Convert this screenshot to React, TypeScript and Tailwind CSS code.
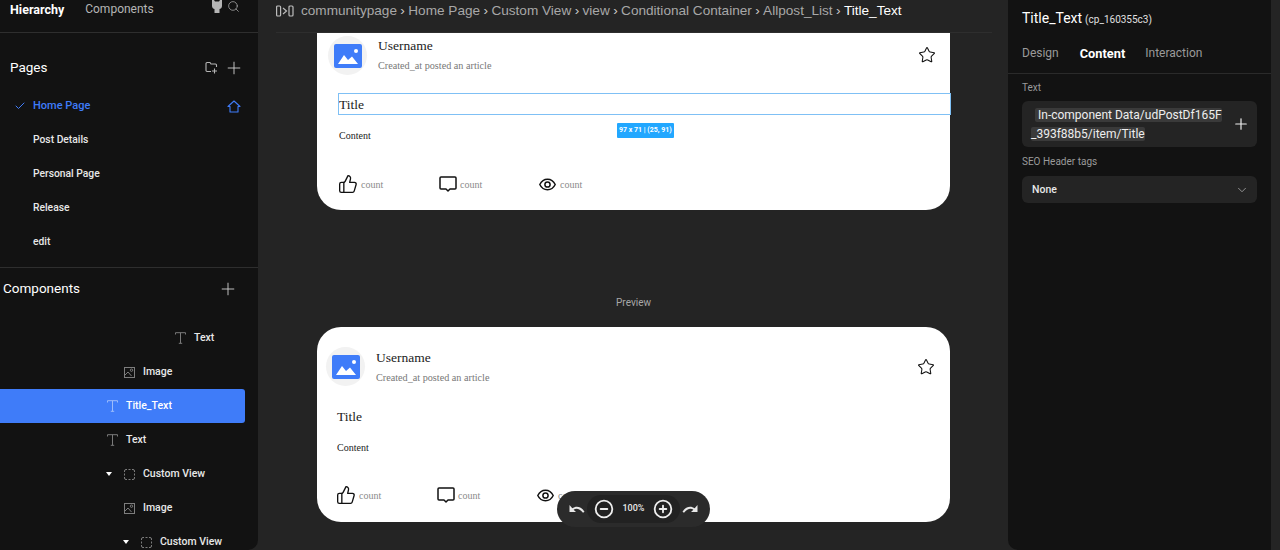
import { Check, ChevronDown, Plus, Search, Star, ThumbsUp, CirclePlus, CircleMinus } from "lucide-react";

const sans = "font-['Roboto',sans-serif]";
const serif = "font-['Liberation_Serif',serif]";

function TIcon({ c = "#7a7a7a" }: { c?: string }) {
  return (
    <svg width="11" height="12" viewBox="0 0 11 12" fill="none" stroke={c} strokeWidth="1" className="shrink-0">
      <path d="M0.5 2.5V0.7H10.5V2.5M5.5 0.7V11.3M3.8 11.3H7.2" />
    </svg>
  );
}
function ImgIcon() {
  return (
    <svg width="11" height="11" viewBox="0 0 11 11" fill="none" stroke="#7d7d7d" strokeWidth="1" className="shrink-0">
      <rect x="0.5" y="0.5" width="10" height="10" />
      <path d="M0.5 8.5L4 5L7.5 9" />
      <circle cx="7.5" cy="3.2" r="1.2" />
    </svg>
  );
}
function ViewIcon() {
  return (
    <svg width="11" height="11" viewBox="0 0 11 11" fill="none" stroke="#7d7d7d" strokeWidth="1" className="shrink-0">
      <path d="M0.5 3V2a1.5 1.5 0 0 1 1.5-1.5H3M8 0.5H9a1.5 1.5 0 0 1 1.5 1.5V3M10.5 8V9a1.5 1.5 0 0 1-1.5 1.5H8M3 10.5H2A1.5 1.5 0 0 1 0.5 9V8M4.5 0.5H6.5M4.5 10.5H6.5M0.5 4.5V6.5M10.5 4.5V6.5" />
    </svg>
  );
}
function Caret() {
  return <span className="w-0 h-0 border-x-[3px] border-x-transparent border-t-[4px] border-t-white shrink-0" />;
}
function TreeRow({ pl, icon, label, caret, active }: { pl: string; icon: React.ReactNode; label: string; caret?: boolean; active?: boolean }) {
  return (
    <div className={`h-[34px] flex items-center mr-[13px] ${pl} ${active ? "bg-[#3f7cf9] rounded-r-[3px]" : ""}`}>
      {caret && <span className="w-[18px] flex"><Caret /></span>}
      {icon}
      <span className={`text-[10.5px] font-medium ml-2 ${active ? "text-white" : "text-[#e8e8e8]"}`}>{label}</span>
    </div>
  );
}
function PageRow({ label, active }: { label: string; active?: boolean }) {
  return (
    <div className={`h-[34px] flex items-center pr-[17px] ${active ? "pt-[2px]" : "pt-px"}`}>
      <span className="w-[33px] pl-[14px] flex">
        {active && <Check size={12} color="#3f7cf9" strokeWidth={2} />}
      </span>
      <span className={`flex-1 font-medium ${active ? "text-[11px] text-[#3f7cf9]" : "text-[10.3px] text-[#e8e8e8]"}`}>{label}</span>
      {active && (
        <svg width="14" height="13" viewBox="0 0 14 13" fill="none" stroke="#3f7cf9" strokeWidth="1.1">
          <path d="M1 6.5L7 1L13 6.5H11V12H3V6.5Z" strokeLinejoin="round" />
        </svg>
      )}
    </div>
  );
}

function Comment() {
  return (
    <svg width="18" height="16" viewBox="0 0 18 16" fill="none" stroke="#111" strokeWidth="1.5" className="shrink-0">
      <path d="M2 1H16a1 1 0 0 1 1 1V12a1 1 0 0 1-1 1H11L9 15L7 13H2a1 1 0 0 1-1-1V2a1 1 0 0 1 1-1Z" strokeLinejoin="round" />
    </svg>
  );
}
function Eye() {
  return (
    <svg width="17" height="13" viewBox="0 0 17 13" fill="none" stroke="#111" strokeWidth="1.5" className="shrink-0">
      <path d="M0.8 6.5C2.5 3 5.3 1.2 8.5 1.2S14.5 3 16.2 6.5C14.5 10 11.7 11.8 8.5 11.8S2.5 10 0.8 6.5Z" />
      <circle cx="8.5" cy="6.5" r="2.6" />
    </svg>
  );
}
function Action({ icon, gap }: { icon: React.ReactNode; gap: string }) {
  return (
    <div className="w-[100px] flex items-center">
      {icon}
      <span className={`${gap} text-[10px] text-[#8a8a8a] ${serif}`}>count</span>
    </div>
  );
}
function Card({ selected }: { selected?: boolean }) {
  return (
    <div className={`${selected ? "h-[177px] rounded-b-[24px] pl-[11px] pt-[3px]" : "h-[195px] rounded-[24px] pl-[9px] pt-[21px]"} w-[633px] bg-white relative ${serif}`}>
      <div className={`flex ${selected ? "pr-[14px]" : "pr-[15px]"}`}>
        <div className={`w-[39px] h-[39px] rounded-full bg-[#f2f2f2] flex items-center justify-center shrink-0 ${selected ? "" : "-mt-px mb-px"}`}>
          <svg width="28" height="24" viewBox="0 0 28 24">
            <rect width="28" height="24" rx="2" fill="#3f7cf9" />
            <path d="M4 20L10 11L14 16L18 12.5L24 20Z" fill="#fff" />
            <circle cx="22" cy="7" r="2" fill="#fff" />
          </svg>
        </div>
        <div className="ml-[11px] flex-1">
          <div className="text-[13.5px] leading-[20px] text-[#222]">Username</div>
          <div className="text-[10.2px] leading-[14px] mt-[3px] text-[#777]">Created_at posted an article</div>
        </div>
        <Star size={18} strokeWidth={1.4} color="#111" className="mt-[10px]" />
      </div>
      <div className={`relative mt-[19px] ml-[10px] h-[22px] flex items-center text-[13.5px] text-[#222] ${selected ? "-mr-px" : ""}`}>
        {selected && <div className="absolute left-0 right-0 -top-px bottom-px border border-[#7fc0f5]" />}
        <span className="pl-px">Title</span>
      </div>
      {selected && (
        <span className={`absolute left-[300px] top-[90px] h-[15px] px-[2px] flex items-center rounded-[1px] bg-[#22a7ff] text-white text-[7px] font-bold whitespace-nowrap ${sans}`}>
          97 x 71 | (25, 91)
        </span>
      )}
      <div className="ml-[11px] mt-[13px] text-[10px] leading-[14px] text-[#222]">Content</div>
      <div className={`ml-[11px] flex items-center ${selected ? "mt-[31px]" : "mt-[30px]"}`}>
        <Action icon={<ThumbsUp size={20} strokeWidth={1.6} color="#111" className="shrink-0 -ml-px" />} gap="ml-[3px]" />
        <Action icon={<Comment />} gap="ml-[3px]" />
        <Action icon={<Eye />} gap="ml-[4px]" />
      </div>
    </div>
  );
}

export default function App() {
  const sep = <span className="mx-[3.4px] text-[#c8c8c8]">›</span>;
  return (
    <div className={`w-[1280px] h-[550px] overflow-hidden bg-[#242424] flex ${sans}`}>
      {/* left panel */}
      <aside className="w-[258px] h-full bg-[#121212] rounded-br-[10px] overflow-hidden shrink-0">
        <div className="h-[33px] border-b border-[#2e2e2e] flex items-start pl-[10px] pr-[18px] pt-[2px]">
          <span className="text-[12.5px] leading-[15px] font-bold text-white">Hierarchy</span>
          <span className="text-[12px] leading-[15px] text-[#b5b5b5] ml-[21px]">Components</span>
          <div className="ml-auto flex items-start">
            <svg width="10" height="13" viewBox="0 0 10 13" className="-mt-[2px]" fill="#b5b5b5">
              <path d="M0 0H2L3 1.5H7L8 0H10V6C10 8 8.5 8.8 7.5 9V13H2.5V9C1.5 8.8 0 8 0 6Z" />
            </svg>
            <Search size={13} color="#b5b5b5" strokeWidth={1.3} className="ml-[5px] -mt-[2px]" />
          </div>
        </div>
        <div className="h-[55px] flex items-center pl-[10px] pr-[14px] pt-[14px]">
          <span className="flex-1 text-[13.5px] text-white">Pages</span>
          <svg width="13" height="13" viewBox="0 0 13 13" fill="none" stroke="#b5b5b5" strokeWidth="1.1" className="mr-[6px]">
            <path d="M6 10.5H2a1 1 0 0 1-1-1V2.5a1 1 0 0 1 1-1h3l1 1.5h4.5a1 1 0 0 1 1 1V6M9.5 7.5v5M7 10h5" />
          </svg>
          <Plus size={20} color="#d0d0d0" strokeWidth={1.1} />
        </div>
        <div>
          <PageRow label="Home Page" active />
          <PageRow label="Post Details" />
          <PageRow label="Personal Page" />
          <PageRow label="Release" />
          <PageRow label="edit" />
        </div>
        <div className="mt-[9px] border-t border-[#2e2e2e] h-[42px] flex items-center pl-[3px] pr-[20px]">
          <span className="flex-1 text-[13.5px] text-white">Components</span>
          <Plus size={20} color="#d0d0d0" strokeWidth={1.1} />
        </div>
        <div className="pt-[12px]">
          <TreeRow pl="pl-[175px]" icon={<TIcon />} label="Text" />
          <TreeRow pl="pl-[124px]" icon={<ImgIcon />} label="Image" />
          <TreeRow pl="pl-[107px]" icon={<TIcon c="#9dbcfb" />} label="Title_Text" active />
          <TreeRow pl="pl-[107px]" icon={<TIcon />} label="Text" />
          <TreeRow pl="pl-[106px]" icon={<ViewIcon />} label="Custom View" caret />
          <TreeRow pl="pl-[124px]" icon={<ImgIcon />} label="Image" />
          <TreeRow pl="pl-[123px]" icon={<ViewIcon />} label="Custom View" caret />
        </div>
      </aside>

      {/* canvas */}
      <main className="flex-1 h-full relative min-w-0">
        <div className="h-[33px] ml-[18px] mr-[16px] border-b border-[#2e2e2e] flex items-start pt-[2px] font-['Liberation_Sans',sans-serif] text-[13.6px] leading-[17px] text-[#a8a8a8] whitespace-nowrap">
          <svg width="18" height="12" viewBox="0 0 18 12" fill="none" stroke="#bdbdbd" strokeWidth="1.2" className="mt-[3px] mr-[7px]">
            <rect x="0.6" y="1" width="4" height="10" rx="1" />
            <path d="M7 3L10.5 6L7 9" />
            <rect x="13" y="1" width="4" height="10" rx="1" />
          </svg>
          <span>communitypage</span>{sep}
          <span>Home Page</span>{sep}
          <span>Custom View</span>{sep}
          <span>view</span>{sep}
          <span>Conditional Container</span>{sep}
          <span>Allpost_List</span>{sep}
          <span className="text-white">Title_Text</span>
        </div>
        <div className="pl-[59px]">
          <Card selected />
          <div className="w-[633px] h-[117px] pt-[86px] text-center text-[10px] leading-[14px] text-[#a8a8a8]">Preview</div>
          <Card />
        </div>
        {/* zoom control */}
        <div className="absolute left-[299px] top-[491px] w-[153px] h-[36px] rounded-full bg-[#2b2b2b] flex items-center justify-between px-[12px] text-white">
          <svg width="16" height="10" viewBox="0 0 16 10" fill="#e8e8e8">
            <path d="M0.5 1V8H7L4.6 5.7C6.8 4.2 10.5 4.2 14 8.8L15.5 7.8C12 2 7 1.5 3.3 4.3Z" />
          </svg>
          <div className="h-[28px] w-[93px] rounded-full bg-[#222] flex items-center justify-between px-[7px]">
            <CircleMinus size={20} strokeWidth={2.2} color="#eee" />
            <span className="text-[9px] font-medium text-[#e8e8e8]">100%</span>
            <CirclePlus size={20} strokeWidth={2.2} color="#eee" />
          </div>
          <svg width="16" height="10" viewBox="0 0 16 10" fill="#e8e8e8">
            <path d="M15.5 1V8H9L11.4 5.7C9.2 4.2 5.5 4.2 2 8.8L0.5 7.8C4 2 9 1.5 12.7 4.3Z" />
          </svg>
        </div>
      </main>

      {/* right panel */}
      <aside className="w-[263px] mr-[9px] h-full bg-[#121212] rounded-bl-[10px] shrink-0">
        <div className="h-[74px] border-b border-[#2a2a2a] px-[14px]">
          <div className="pt-[8px] h-[39px] flex items-baseline whitespace-nowrap">
            <span className="text-[14px] text-white">Title_Text</span>
            <span className="text-[10px] text-[#e0e0e0] ml-[3px]">(cp_160355c3)</span>
          </div>
          <div className="flex items-center text-[12px] leading-[15px] mt-[7px] text-[#9a9a9a]">
            <span>Design</span>
            <span className="ml-[21px] text-[12.8px] font-bold text-white">Content</span>
            <span className="ml-[20px]">Interaction</span>
          </div>
        </div>
        <div className="px-[14px]">
          <div className="text-[10px] leading-[13px] text-[#9a9a9a] mt-[7px]">Text</div>
          <div className="mt-[7px] h-[46px] w-[235px] rounded-[6px] bg-[#242424] flex items-center pl-[9px] pr-[7px]">
            <div className="flex-1 pt-px text-[12px] leading-[19px] text-[#eeeeee] whitespace-nowrap">
              <div><span className="bg-[#3a3a3a] pl-[3px] ml-[4px] rounded-[2px]">In-component Data/udPostDf165F</span></div>
              <div><span className="bg-[#3a3a3a] rounded-[2px]">_393f88b5/item/Title</span></div>
            </div>
            <Plus size={18} color="#eee" strokeWidth={1.6} className="shrink-0" />
          </div>
          <div className="text-[10px] leading-[13px] text-[#9a9a9a] mt-[8px]">SEO Header tags</div>
          <div className="mt-[8px] h-[27px] w-[235px] rounded-[6px] bg-[#242424] flex items-center pl-[10px] pr-[8px]">
            <span className="flex-1 text-[10.5px] font-medium text-[#e8e8e8]">None</span>
            <ChevronDown size={14} color="#a0a0a0" strokeWidth={1.5} />
          </div>
        </div>
      </aside>
    </div>
  );
}
